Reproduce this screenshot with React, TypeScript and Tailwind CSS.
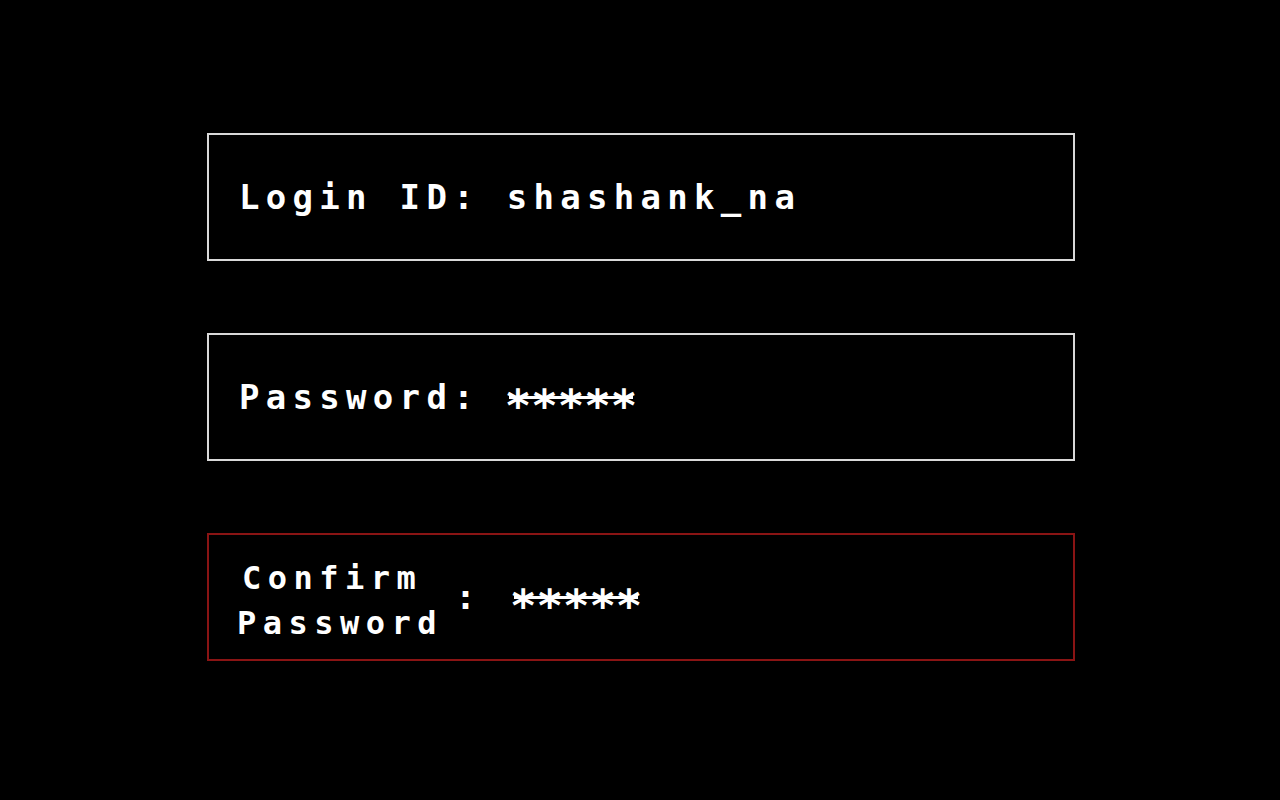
const pixelFont = "font-['DejaVu_Sans_Mono',monospace] font-bold text-[34px] tracking-[6.3px] text-white leading-none";
const labelFont = "font-['DejaVu_Sans_Mono',monospace] font-bold text-[32px] tracking-[6.5px] text-white leading-none";

function Stars() {
  return (
    <span className="relative inline-flex items-center">
      <span className="font-['DejaVu_Sans_Mono',monospace] font-bold text-[44px] leading-none text-white translate-y-[9px] -ml-[2px]">
        *****
      </span>
      <span className="absolute left-[2px] right-[4px] top-1/2 h-[3px] -translate-y-[1px] bg-white" />
    </span>
  );
}

function Box({ red, children }: { red?: boolean; children: React.ReactNode }) {
  return (
    <div
      className={
        "flex h-[128px] w-[868px] items-center border-2 " +
        (red ? "border-[#8a1414] pl-[28px]" : "border-[#d9d9d9] pl-[30px]")
      }
    >
      {children}
    </div>
  );
}

export default function App() {
  return (
    <div className="min-h-[800px] w-full bg-black">
      <div className="flex flex-col gap-[72px] pl-[207px] pt-[133px]">
        <Box>
          <span className={pixelFont + " whitespace-pre"}>Login ID: shashank_na</span>
        </Box>
        <Box>
          <span className={pixelFont + " whitespace-pre"}>Password: </span>
          <Stars />
        </Box>
        <Box red>
          <div className="flex translate-y-[3px] flex-col gap-[13px]">
            <span className={labelFont + " pl-[5px]"}>Confirm</span>
            <span className={labelFont}>Password</span>
          </div>
          <span className={pixelFont + " ml-[12px] mr-[30px]"}>:</span>
          <Stars />
        </Box>
      </div>
    </div>
  );
}
